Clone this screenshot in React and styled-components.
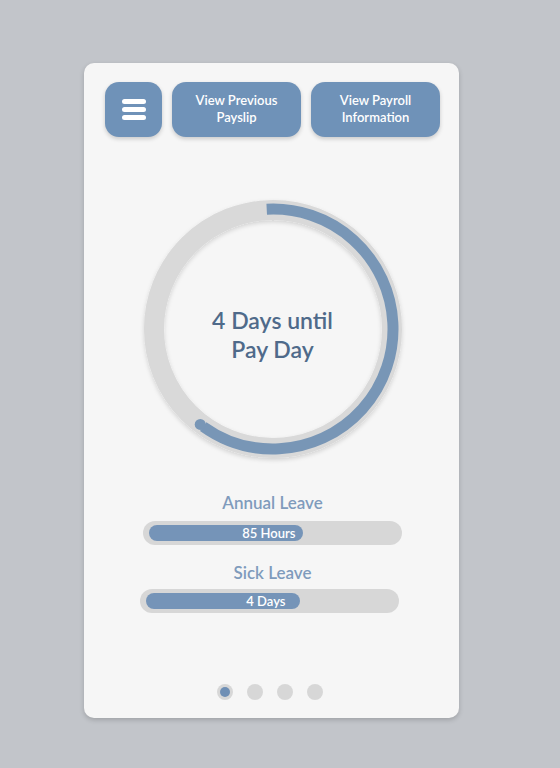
import React from 'react';
import styled, { createGlobalStyle } from 'styled-components';

const Global = createGlobalStyle`
  html, body { margin: 0; padding: 0; background: #c2c5ca; }
  body { font-family: Lato, "Open Sans", sans-serif; }
`;

const Page = styled.div`
  width: 560px;
  height: 768px;
  padding: 63px 0 0 84px;
  box-sizing: border-box;
`;

const Card = styled.div`
  width: 375px;
  height: 655px;
  background: #f6f6f6;
  border-radius: 10px;
  box-shadow: 0 2px 5px rgba(0, 0, 0, 0.18);
  box-sizing: border-box;
  padding: 19px 19px 0 21px;
  display: flex;
  flex-direction: column;
  align-items: center;
`;

const Toolbar = styled.div`
  display: flex;
  gap: 10px;
  width: 100%;
`;

const Btn = styled.button`
  width: ${p => p.w}px;
  height: 55px;
  border: none;
  border-radius: 14px;
  background: #6f92b8;
  color: #fff;
  font-family: inherit;
  font-weight: 600;
  font-size: 13px;
  line-height: 17px;
  box-shadow: 0 2px 4px rgba(0, 0, 0, 0.18);
  display: flex;
  align-items: center;
  justify-content: center;
  padding: 0 0 1px;
  cursor: pointer;
`;

const Burger = styled.span`
  display: flex;
  flex-direction: column;
  gap: 3px;
  span {
    width: 24px;
    height: 5px;
    border-radius: 3px;
    background: #fff;
  }
`;

const RingBox = styled.div`
  position: relative;
  width: 262px;
  height: 262px;
  margin-top: 61px;
`;

const RingText = styled.div`
  position: absolute;
  inset: 0;
  display: flex;
  align-items: center;
  justify-content: center;
  text-align: center;
  color: #4f6a8a;
  font-size: 23px;
  font-weight: 600;
  line-height: 29px;
  padding-top: 12px;
  box-sizing: border-box;
`;

const Label = styled.div`
  margin-top: ${p => p.top}px;
  color: #7f9bbc;
  font-size: 17px;
  font-weight: 600;
`;

const Track = styled.div`
  width: 259px;
  height: 24px;
  margin-top: ${p => p.gap}px;
  margin-left: ${p => p.shift}px;
  border-radius: 12px;
  background: #d7d7d7;
  display: flex;
  align-items: center;
  padding: 0 6px;
  box-sizing: border-box;
`;

const Fill = styled.div`
  height: 16px;
  border-radius: 8px;
  background: #7594b8;
  color: #fff;
  font-size: 13px;
  font-weight: 600;
  display: flex;
  align-items: center;
  justify-content: flex-end;
  padding-right: ${p => p.pad}px;
  box-sizing: border-box;
`;

const Dots = styled.div`
  margin-top: auto;
  margin-bottom: 18px;
  display: flex;
  gap: 14px;
  margin-left: -5px;
`;

const Dot = styled.span`
  width: 16px;
  height: 16px;
  border-radius: 50%;
  background: #d7d7d7;
  display: flex;
  align-items: center;
  justify-content: center;
  &::after {
    content: '';
    width: 10px;
    height: 10px;
    border-radius: 50%;
    background: ${p => (p.active ? '#6f8fb5' : 'transparent')};
  }
`;

// progress ring: starts a little left of 12 o'clock, square start, round end
function Ring({ percent, start = -3 }) {
  const c = 131;
  const r = 119;
  const len = 2 * Math.PI * r;
  const endAngle = ((start + 360 * percent) * Math.PI) / 180;
  return (
    <svg width="262" height="262" viewBox="0 0 262 262" style={{ overflow: 'visible' }}>
      <defs>
        <filter id="sh" x="-10%" y="-10%" width="120%" height="120%">
          <feDropShadow dx="0" dy="2" stdDeviation="2" floodColor="#000" floodOpacity="0.15" />
        </filter>
      </defs>
      <circle cx={c} cy={c} r={r} fill="none" stroke="#d9d9d9" strokeWidth="20" filter="url(#sh)" />
      <circle
        cx={c}
        cy={c}
        r={r + 1}
        fill="none"
        stroke="#7896b6"
        strokeWidth="11"
        strokeDasharray={`${len * percent} ${len * 2}`}
        transform={`rotate(${start - 90} ${c} ${c})`}
      />
      <circle
        cx={c + (r + 1) * Math.sin(endAngle)}
        cy={c - (r + 1) * Math.cos(endAngle)}
        r="5.5"
        fill="#7896b6"
      />
    </svg>
  );
}

export default function App() {
  return (
    <Page>
      <Global />
      <Card>
        <Toolbar>
          <Btn w={57}>
            <Burger><span /><span /><span /></Burger>
          </Btn>
          <Btn w={129}>View Previous<br />Payslip</Btn>
          <Btn w={129}>View Payroll<br />Information</Btn>
        </Toolbar>

        <RingBox>
          <Ring percent={0.612} />
          <RingText>4 Days until<br />Pay Day</RingText>
        </RingBox>

        <Label top={32}>Annual Leave</Label>
        <Track gap={8} shift={-1}>
          <Fill style={{ width: 154 }} pad={7}>85 Hours</Fill>
        </Track>

        <Label top={17}>Sick Leave</Label>
        <Track gap={6} shift={-7}>
          <Fill style={{ width: 154 }} pad={14}>4 Days</Fill>
        </Track>

        <Dots>
          <Dot active />
          <Dot />
          <Dot />
          <Dot />
        </Dots>
      </Card>
    </Page>
  );
}
